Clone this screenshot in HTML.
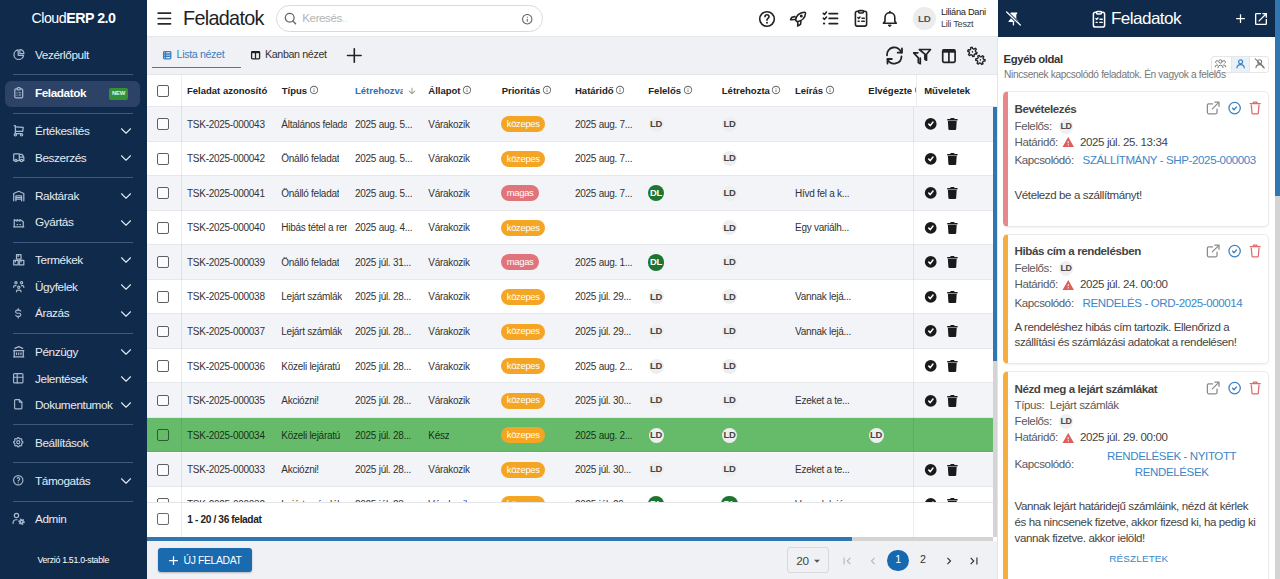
<!DOCTYPE html><html><head><meta charset="utf-8"><title>Feladatok</title><style>
*{box-sizing:border-box}
html,body{margin:0;padding:0}
body{width:1280px;height:579px;overflow:hidden;position:relative;font-family:"Liberation Sans",sans-serif;background:#fff;color:#333}
div,span,svg{position:absolute}
svg{display:block}
.ic{position:absolute}
.t{white-space:nowrap;line-height:1.3}
</style></head><body>
<div style="left:0;top:0;width:147px;height:579px;background:#0f2a4b">
<span class="t" style="left:-26.50px;width:200px;text-align:center;top:9.17px;font-size:14.23px;letter-spacing:-0.484px;color:#fff;font-weight:400;">Cloud<b>ERP 2.0</b></span>
<div style="left:5px;top:81px;width:135px;height:26px;border-radius:6px;background:#2c4266"></div>
<div style="left:13px;top:74.3px;width:120px;height:1px;background:#40577a"></div>
<div style="left:13px;top:112.5px;width:120px;height:1px;background:#40577a"></div>
<div style="left:13px;top:176.9px;width:120px;height:1px;background:#40577a"></div>
<div style="left:13px;top:242.0px;width:120px;height:1px;background:#40577a"></div>
<div style="left:13px;top:333.0px;width:120px;height:1px;background:#40577a"></div>
<div style="left:13px;top:424.3px;width:120px;height:1px;background:#40577a"></div>
<div style="left:13px;top:461.5px;width:120px;height:1px;background:#40577a"></div>
<div style="left:13px;top:500.5px;width:120px;height:1px;background:#40577a"></div>
<svg class="ic" style="left:11.75px;top:47.95px" width="13.5" height="13.5" viewBox="0 0 24 24" fill="none" stroke="#a9b8cc" stroke-width="2.2" stroke-linecap="round" stroke-linejoin="round"><path d="M11 3.5a8.5 8.5 0 1 0 9.5 9.5h-9.5z"/><path d="M14 2.8v7.2h7.2a7.5 7.5 0 0 0 -7.2 -7.2z"/></svg>
<span class="t" style="left:35.00px;top:46.98px;font-size:11.77px;letter-spacing:-0.400px;color:#e6ebf2;font-weight:400;">Vezérlőpult</span>
<svg class="ic" style="left:11.75px;top:85.95px" width="13.5" height="13.5" viewBox="0 0 24 24" fill="none" stroke="#a9b8cc" stroke-width="2.2" stroke-linecap="round" stroke-linejoin="round"><path d="M9 5h-2a2 2 0 0 0 -2 2v12a2 2 0 0 0 2 2h10a2 2 0 0 0 2 -2v-12a2 2 0 0 0 -2 -2h-2"/><path d="M9 5a2 2 0 0 1 2 -2h2a2 2 0 0 1 2 2v0a2 2 0 0 1 -2 2h-2a2 2 0 0 1 -2 -2z"/><path d="M9 12h.01"/><path d="M13 12h2"/><path d="M9 16h.01"/><path d="M13 16h2"/></svg>
<span class="t" style="left:35.00px;top:84.98px;font-size:11.77px;letter-spacing:-0.431px;color:#fff;font-weight:700;">Feladatok</span>
<svg class="ic" style="left:11.75px;top:123.94999999999999px" width="13.5" height="13.5" viewBox="0 0 24 24" fill="none" stroke="#a9b8cc" stroke-width="2.2" stroke-linecap="round" stroke-linejoin="round"><path d="M6 19m-2 0a2 2 0 1 0 4 0a2 2 0 1 0 -4 0"/><path d="M17 19m-2 0a2 2 0 1 0 4 0a2 2 0 1 0 -4 0"/><path d="M17 17h-11v-14h-2"/><path d="M6 5l14 1l-1 7h-13"/></svg>
<span class="t" style="left:35.00px;top:122.98px;font-size:11.77px;letter-spacing:-0.400px;color:#e6ebf2;font-weight:400;">Értékesítés</span>
<svg class="ic" style="left:116.8px;top:122.19999999999999px" width="18" height="18" viewBox="0 0 24 24" fill="none" stroke="#dfe5ee" stroke-width="1.5" stroke-linecap="round" stroke-linejoin="round"><path d="M6 9l6 6l6 -6"/></svg>
<svg class="ic" style="left:11.75px;top:150.75px" width="13.5" height="13.5" viewBox="0 0 24 24" fill="none" stroke="#a9b8cc" stroke-width="2.2" stroke-linecap="round" stroke-linejoin="round"><path d="M7 17m-2 0a2 2 0 1 0 4 0a2 2 0 1 0 -4 0"/><path d="M17 17m-2 0a2 2 0 1 0 4 0a2 2 0 1 0 -4 0"/><path d="M5 17h-2v-11a1 1 0 0 1 1 -1h9v12m-4 0h6m4 0h2v-6h-8m0 -5h5l3 5"/></svg>
<span class="t" style="left:35.00px;top:149.78px;font-size:11.77px;letter-spacing:-0.400px;color:#e6ebf2;font-weight:400;">Beszerzés</span>
<svg class="ic" style="left:116.8px;top:149.0px" width="18" height="18" viewBox="0 0 24 24" fill="none" stroke="#dfe5ee" stroke-width="1.5" stroke-linecap="round" stroke-linejoin="round"><path d="M6 9l6 6l6 -6"/></svg>
<svg class="ic" style="left:11.75px;top:188.64999999999998px" width="13.5" height="13.5" viewBox="0 0 24 24" fill="none" stroke="#a9b8cc" stroke-width="2.2" stroke-linecap="round" stroke-linejoin="round"><path d="M3 21v-13l9 -4l9 4v13"/><path d="M7 21v-9h10v9"/><path d="M7 15h10"/><path d="M7 18h10"/></svg>
<span class="t" style="left:35.00px;top:187.68px;font-size:11.77px;letter-spacing:-0.400px;color:#e6ebf2;font-weight:400;">Raktárak</span>
<svg class="ic" style="left:116.8px;top:186.89999999999998px" width="18" height="18" viewBox="0 0 24 24" fill="none" stroke="#dfe5ee" stroke-width="1.5" stroke-linecap="round" stroke-linejoin="round"><path d="M6 9l6 6l6 -6"/></svg>
<svg class="ic" style="left:11.75px;top:215.45px" width="13.5" height="13.5" viewBox="0 0 24 24" fill="none" stroke="#a9b8cc" stroke-width="2.2" stroke-linecap="round" stroke-linejoin="round"><path d="M3 21h18"/><path d="M4 21v-13l5 3v-3l5 3v-3l6 4v9"/><path d="M9 17h1"/><path d="M14 17h1"/></svg>
<span class="t" style="left:35.00px;top:214.48px;font-size:11.77px;letter-spacing:-0.400px;color:#e6ebf2;font-weight:400;">Gyártás</span>
<svg class="ic" style="left:116.8px;top:213.7px" width="18" height="18" viewBox="0 0 24 24" fill="none" stroke="#dfe5ee" stroke-width="1.5" stroke-linecap="round" stroke-linejoin="round"><path d="M6 9l6 6l6 -6"/></svg>
<svg class="ic" style="left:11.75px;top:252.95px" width="13.5" height="13.5" viewBox="0 0 24 24" fill="none" stroke="#a9b8cc" stroke-width="2.2" stroke-linecap="round" stroke-linejoin="round"><path d="M3 13h8v8h-8z"/><path d="M13 13h8v8h-8z"/><path d="M8 3h8v8h-8z"/><path d="M6 13v3"/><path d="M16 13v3"/><path d="M11 3v3"/></svg>
<span class="t" style="left:35.00px;top:251.98px;font-size:11.77px;letter-spacing:-0.400px;color:#e6ebf2;font-weight:400;">Termékek</span>
<svg class="ic" style="left:116.8px;top:251.2px" width="18" height="18" viewBox="0 0 24 24" fill="none" stroke="#dfe5ee" stroke-width="1.5" stroke-linecap="round" stroke-linejoin="round"><path d="M6 9l6 6l6 -6"/></svg>
<svg class="ic" style="left:11.75px;top:279.65px" width="13.5" height="13.5" viewBox="0 0 24 24" fill="none" stroke="#a9b8cc" stroke-width="2.2" stroke-linecap="round" stroke-linejoin="round"><path d="M10 13a2 2 0 1 0 4 0a2 2 0 0 0 -4 0"/><path d="M8 21v-1a2 2 0 0 1 2 -2h4a2 2 0 0 1 2 2v1"/><path d="M15 5a2 2 0 1 0 4 0a2 2 0 0 0 -4 0"/><path d="M17 10h2a2 2 0 0 1 2 2v1"/><path d="M5 5a2 2 0 1 0 4 0a2 2 0 0 0 -4 0"/><path d="M3 13v-1a2 2 0 0 1 2 -2h2"/></svg>
<span class="t" style="left:35.00px;top:278.68px;font-size:11.77px;letter-spacing:-0.400px;color:#e6ebf2;font-weight:400;">Ügyfelek</span>
<svg class="ic" style="left:116.8px;top:277.9px" width="18" height="18" viewBox="0 0 24 24" fill="none" stroke="#dfe5ee" stroke-width="1.5" stroke-linecap="round" stroke-linejoin="round"><path d="M6 9l6 6l6 -6"/></svg>
<svg class="ic" style="left:12.25px;top:306.95px" width="12.5" height="12.5" viewBox="0 0 24 24" fill="none" stroke="#a9b8cc" stroke-width="2.2" stroke-linecap="round" stroke-linejoin="round"><path d="M16.7 8a3 3 0 0 0 -2.7 -2h-4a3 3 0 0 0 0 6h4a3 3 0 0 1 0 6h-4a3 3 0 0 1 -2.7 -2"/><path d="M12 3v3m0 12v3"/></svg>
<span class="t" style="left:35.00px;top:305.48px;font-size:11.77px;letter-spacing:-0.400px;color:#e6ebf2;font-weight:400;">Árazás</span>
<svg class="ic" style="left:116.8px;top:304.7px" width="18" height="18" viewBox="0 0 24 24" fill="none" stroke="#dfe5ee" stroke-width="1.5" stroke-linecap="round" stroke-linejoin="round"><path d="M6 9l6 6l6 -6"/></svg>
<svg class="ic" style="left:11.75px;top:344.95px" width="13.5" height="13.5" viewBox="0 0 24 24" fill="none" stroke="#a9b8cc" stroke-width="2.2" stroke-linecap="round" stroke-linejoin="round"><path d="M3 21h18"/><path d="M3 10h18"/><path d="M5 6l7 -3l7 3"/><path d="M4 10v11"/><path d="M20 10v11"/><path d="M8 14v3"/><path d="M12 14v3"/><path d="M16 14v3"/></svg>
<span class="t" style="left:35.00px;top:343.98px;font-size:11.77px;letter-spacing:-0.400px;color:#e6ebf2;font-weight:400;">Pénzügy</span>
<svg class="ic" style="left:116.8px;top:343.2px" width="18" height="18" viewBox="0 0 24 24" fill="none" stroke="#dfe5ee" stroke-width="1.5" stroke-linecap="round" stroke-linejoin="round"><path d="M6 9l6 6l6 -6"/></svg>
<svg class="ic" style="left:12.25px;top:372.25px" width="12.5" height="12.5" viewBox="0 0 24 24" fill="none" stroke="#a9b8cc" stroke-width="2.2" stroke-linecap="round" stroke-linejoin="round"><path d="M3 5a2 2 0 0 1 2 -2h14a2 2 0 0 1 2 2v14a2 2 0 0 1 -2 2h-14a2 2 0 0 1 -2 -2v-14z"/><path d="M3 10h18"/><path d="M10 3v18"/></svg>
<span class="t" style="left:35.00px;top:370.78px;font-size:11.77px;letter-spacing:-0.400px;color:#e6ebf2;font-weight:400;">Jelentések</span>
<svg class="ic" style="left:116.8px;top:370.0px" width="18" height="18" viewBox="0 0 24 24" fill="none" stroke="#dfe5ee" stroke-width="1.5" stroke-linecap="round" stroke-linejoin="round"><path d="M6 9l6 6l6 -6"/></svg>
<svg class="ic" style="left:12.25px;top:398.25px" width="12.5" height="12.5" viewBox="0 0 24 24" fill="none" stroke="#a9b8cc" stroke-width="2.2" stroke-linecap="round" stroke-linejoin="round"><path d="M14 3v4a1 1 0 0 0 1 1h4"/><path d="M17 21h-10a2 2 0 0 1 -2 -2v-14a2 2 0 0 1 2 -2h7l5 5v11a2 2 0 0 1 -2 2z"/></svg>
<span class="t" style="left:35.00px;top:396.78px;font-size:11.77px;letter-spacing:-0.400px;color:#e6ebf2;font-weight:400;">Dokumentumok</span>
<svg class="ic" style="left:116.8px;top:396.0px" width="18" height="18" viewBox="0 0 24 24" fill="none" stroke="#dfe5ee" stroke-width="1.5" stroke-linecap="round" stroke-linejoin="round"><path d="M6 9l6 6l6 -6"/></svg>
<svg class="ic" style="left:12.25px;top:436.45px" width="12.5" height="12.5" viewBox="0 0 24 24" fill="none" stroke="#a9b8cc" stroke-width="2.2" stroke-linecap="round" stroke-linejoin="round"><path d="M10.325 4.317c.426 -1.756 2.924 -1.756 3.35 0a1.724 1.724 0 0 0 2.573 1.066c1.543 -.94 3.31 .826 2.37 2.37a1.724 1.724 0 0 0 1.065 2.572c1.756 .426 1.756 2.924 0 3.35a1.724 1.724 0 0 0 -1.066 2.573c.94 1.543 -.826 3.31 -2.37 2.37a1.724 1.724 0 0 0 -2.572 1.065c-.426 1.756 -2.924 1.756 -3.35 0a1.724 1.724 0 0 0 -2.573 -1.066c-1.543 .94 -3.31 -.826 -2.37 -2.37a1.724 1.724 0 0 0 -1.065 -2.572c-1.756 -.426 -1.756 -2.924 0 -3.35a1.724 1.724 0 0 0 1.066 -2.573c-.94 -1.543 .826 -3.31 2.37 -2.37c1 .608 2.296 .07 2.572 -1.065z"/><path d="M9 12a3 3 0 1 0 6 0a3 3 0 0 0 -6 0"/></svg>
<span class="t" style="left:35.00px;top:434.98px;font-size:11.77px;letter-spacing:-0.400px;color:#e6ebf2;font-weight:400;">Beállítások</span>
<svg class="ic" style="left:12.25px;top:474.45px" width="12.5" height="12.5" viewBox="0 0 24 24" fill="none" stroke="#a9b8cc" stroke-width="2.2" stroke-linecap="round" stroke-linejoin="round"><path d="M12 12m-9 0a9 9 0 1 0 18 0a9 9 0 1 0 -18 0"/><path d="M12 17v.01"/><path d="M12 13.5a1.5 1.5 0 0 1 1 -1.5a2.6 2.6 0 1 0 -3 -4"/></svg>
<span class="t" style="left:35.00px;top:472.98px;font-size:11.77px;letter-spacing:-0.400px;color:#e6ebf2;font-weight:400;">Támogatás</span>
<svg class="ic" style="left:116.8px;top:472.2px" width="18" height="18" viewBox="0 0 24 24" fill="none" stroke="#dfe5ee" stroke-width="1.5" stroke-linecap="round" stroke-linejoin="round"><path d="M6 9l6 6l6 -6"/></svg>
<svg class="ic" style="left:11.3px;top:511.45px" width="14.5" height="14.5" viewBox="0 0 24 24" fill="none" stroke="#a9b8cc" stroke-width="2" stroke-linecap="round" stroke-linejoin="round"><path d="M5.5 7.5a3.6 3.6 0 1 0 7.2 0a3.6 3.6 0 0 0 -7.2 0"/><path d="M3.5 20.5v-1.5a4.5 4.5 0 0 1 4.5 -4.5h2.2"/><path d="M21.08 17.39 L22.50 17.96 L22.17 19.60 L20.63 19.57 L19.64 20.69 L19.86 22.21 L18.28 22.74 L17.53 21.40 L16.07 21.10 L14.86 22.05 L13.61 20.94 L14.40 19.63 L13.92 18.21 L12.50 17.64 L12.83 16.00 L14.37 16.03 L15.36 14.91 L15.14 13.39 L16.72 12.86 L17.47 14.20 L18.93 14.50 L20.14 13.55 L21.39 14.66 L20.60 15.97Z" fill="#a9b8cc" stroke-width="1"/><circle cx="17.5" cy="17.8" r="1.3" fill="#0f2a4b" stroke="none"/></svg>
<span class="t" style="left:35.00px;top:510.98px;font-size:11.77px;letter-spacing:-0.400px;color:#e6ebf2;font-weight:400;">Admin</span>
<div style="left:109px;top:87.8px;width:19.2px;height:12px;border-radius:2px;background:#33913a"></div>
<span class="t" style="left:108.50px;width:20px;text-align:center;top:89.64px;font-size:5.89px;letter-spacing:-0.218px;color:#e7f5e7;font-weight:700;">NEW</span>
<span class="t" style="left:-26.80px;width:200px;text-align:center;top:555.45px;font-size:8.77px;letter-spacing:-0.296px;color:#fff;font-weight:400;">Verzió 1.51.0-stable</span>
</div>
<div style="left:147px;top:0;width:851px;height:37px;background:#fff;border-bottom:1px solid #e4e6ea"></div>
<span class="t" style="left:183.00px;top:5.51px;font-size:19.8px;letter-spacing:-0.676px;color:#222;font-weight:400;">Feladatok</span>
<div style="left:276px;top:5px;width:266.5px;height:27px;border:1px solid #dadada;border-radius:13.5px;background:#fff"></div>
<svg class="ic" style="left:282px;top:10px" width="16" height="16" viewBox="0 0 16 16" fill="none" stroke="#666" stroke-width="1.3" stroke-linecap="round"><circle cx="7.7" cy="7.8" r="4.4"/><path d="M10.9 11l2.7 2.7"/></svg>
<span class="t" style="left:302.30px;top:11.12px;font-size:11.56px;letter-spacing:-0.395px;color:#b3b3b3;font-weight:400;">Keresés<span style="color:#e6e6e6">..</span></span>
<svg class="ic" style="left:521.4px;top:13.4px" width="12.5" height="12.5" viewBox="0 0 24 24" fill="#666" ><path d="M11 7h2v2h-2zm0 4h2v6h-2zm1-9C6.48 2 2 6.48 2 12s4.48 10 10 10 10-4.48 10-10S17.52 2 12 2zm0 18c-4.41 0-8-3.59-8-8s3.59-8 8-8 8 3.59 8 8-3.59 8-8 8z"/></svg>
<svg class="ic" style="left:754.5px;top:6.6px" width="24" height="24" viewBox="0 0 24 24" fill="none" stroke="#222" stroke-width="1.6" stroke-linecap="round" stroke-linejoin="round"><circle cx="12" cy="12" r="7.3"/><path d="M12 15.6v.1" stroke-width="1.9"/><path d="M12 13.3v-.5c0 -.7 .4 -1 1 -1.4c.6 -.4 1 -.9 1 -1.6a2 2 0 0 0 -4 0"/></svg>
<svg class="ic" style="left:788px;top:4px" width="20" height="24" viewBox="0 0 20 24" fill="none" stroke="#222" stroke-width="1.6" stroke-linecap="round" stroke-linejoin="round"><path d="M7.5 16.1C7.9 11.8 11.5 8.6 16.2 8.2Q17.6 8.1 17.5 9.5C17.1 13.6 13.9 16.9 9.2 17.8Z"/><path d="M6.9 12.6L3.9 13.2L2.6 15.7L6.3 15.5"/><path d="M12.9 17.3L12.5 20.4L9.7 22L9.8 18.6"/><circle cx="13.3" cy="11.9" r=".7" fill="#222"/></svg>
<svg class="ic" style="left:820px;top:9px" width="20" height="20" viewBox="0 0 20 20" fill="none" stroke="#222" stroke-width="1.6" stroke-linecap="round" stroke-linejoin="round"><path d="M3.3 4.3l1.2 1.1l2 -2.3M3.3 9.2l1.2 1.1l2 -2.3"/><path d="M3.9 14.6h.3" stroke-width="2"/><path d="M9.2 4.6h8.3M9.2 9.4h8.3M9.2 14.6h8.3" stroke-width="1.8"/></svg>
<svg class="ic" style="left:853.5px;top:9.3px" width="14" height="18" viewBox="0 0 14 18" fill="none" stroke="#222" stroke-width="1.6" stroke-linecap="round" stroke-linejoin="round"><path d="M4.3 2.2H3.3A1.9 1.9 0 0 0 1.4 4.1V15.2A1.9 1.9 0 0 0 3.3 17.1H10.7A1.9 1.9 0 0 0 12.6 15.2V4.1A1.9 1.9 0 0 0 10.7 2.2H9.7"/><rect x="4.4" y="1.6" width="5.2" height="2.4" rx="1.2"/><path d="M3.9 8.6l.8 .8l1.3 -1.4M8 9.2h2.3M4.1 12.3h1.1M7.8 12.3h2.5" stroke-width="1.4400000000000002"/></svg>
<svg class="ic" style="left:881px;top:9px" width="18" height="20" viewBox="0 0 18 20" fill="none" stroke="#222" stroke-width="1.6" stroke-linecap="round" stroke-linejoin="round"><path d="M2.4 14.2H15.3L13.8 12.2V8.5A4.8 4.8 0 0 0 4 8.5V12.2Z"/><path d="M8.9 2.6v.9"/><path d="M7.6 16.1h2.6l-1.3 1.5z" fill="#222" stroke-width="1"/></svg>
<div style="left:913px;top:7.3px;width:22.5px;height:22.5px;border-radius:50%;background:#ececec"></div>
<span class="t" style="left:909.30px;width:30px;text-align:center;top:12.65px;font-size:9.84px;letter-spacing:-0.358px;color:#555;font-weight:700;">LD</span>
<span class="t" style="left:941.00px;top:5.59px;font-size:9.31px;letter-spacing:-0.317px;color:#222;font-weight:400;">Liliána Dani</span>
<span class="t" style="left:941.00px;top:18.09px;font-size:9.31px;letter-spacing:-0.317px;color:#444;font-weight:400;">Lili Teszt</span>
<div style="left:147px;top:37px;width:851px;height:38px;background:#eff1f5;border-bottom:1px solid #e3e5ea"></div>
<div style="left:152px;top:66.8px;width:88.5px;height:1.6px;background:#3a7fc0"></div>
<svg class="ic" style="left:162px;top:50px" width="10" height="10" viewBox="0 0 10 10" fill="none" stroke="#3a7fc1" stroke-width="1.3"><rect x="1.6" y="1.6" width="7.2" height="7.2" rx=".8"/><path d="M3.6 1.6v7.2M1.6 4h7.2"/><path d="M1.6 6.3h7.2" stroke-width="1.6"/></svg>
<span class="t" style="left:176.60px;top:48.28px;font-size:10.7px;letter-spacing:-0.364px;color:#3a7fc1;font-weight:400;">Lista nézet</span>
<svg class="ic" style="left:250px;top:50px" width="11" height="10" viewBox="0 0 11 10" fill="none" stroke="#222" stroke-width="1.3"><rect x="1.6" y="1.6" width="8" height="7.2" rx=".8"/><path d="M1.6 2.3h8" stroke-width="1.8"/><path d="M5.5 2v6.8"/></svg>
<span class="t" style="left:265.00px;top:48.28px;font-size:10.7px;letter-spacing:-0.364px;color:#333;font-weight:400;">Kanban nézet</span>
<svg class="ic" style="left:345px;top:46px" width="20" height="20" viewBox="0 0 20 20" fill="none" stroke="#222" stroke-width="1.6" stroke-linecap="round"><path d="M2.5 9.5h13.6M9.3 2.7v13.6"/></svg>
<svg class="ic" style="left:882px;top:44px" width="24" height="24" viewBox="0 0 24 24" fill="none" stroke="#222" stroke-width="1.8" stroke-linecap="round" stroke-linejoin="round"><path d="M5 11.3a7.3 7.3 0 0 1 14.3 -2.6"/><path d="M20 4.5v4.2h-4.3"/><path d="M19.5 12.5a7.3 7.3 0 0 1 -13.9 2.9"/><path d="M5.5 19.5v-4.5h4.3"/></svg>
<svg class="ic" style="left:908px;top:44px" width="30" height="24" viewBox="0 0 30 24" fill="none" stroke="#222" stroke-width="1.7" stroke-linecap="round" stroke-linejoin="round"><path d="M11.3 5.5h11.2l-4 4.7v6l-1.6 -.9v-5.1z"/><path d="M9.8 8.8h-4.1l4.6 5v4.7l2 1.2v-5.5"/></svg>
<svg class="ic" style="left:940px;top:47px" width="18" height="18" viewBox="0 0 18 18" fill="none" stroke="#222" stroke-width="1.7" stroke-linejoin="round"><rect x="2.7" y="2.9" width="12.4" height="12.4" rx="1.3"/><path d="M2.7 4.2h12.4" stroke-width="3"/><path d="M8.9 3v12.3"/></svg>
<svg class="ic" style="left:962px;top:42px" width="28" height="28" viewBox="0 0 28 28" fill="none" stroke="#222" stroke-width="1.35" stroke-linejoin="round"><path d="M13.60 9.85 L15.06 10.52 L14.60 12.02 L13.02 11.74 L12.04 12.65 L12.19 14.25 L10.66 14.59 L10.11 13.09 L8.84 12.69 L7.53 13.62 L6.47 12.47 L7.50 11.24 L7.20 9.95 L5.74 9.28 L6.20 7.78 L7.78 8.06 L8.76 7.15 L8.61 5.55 L10.14 5.21 L10.69 6.71 L11.96 7.11 L13.27 6.18 L14.33 7.33 L13.30 8.56Z"/><path d="M21.53 17.22 L23.09 17.58 L22.93 19.14 L21.33 19.19 L20.55 20.27 L21.02 21.80 L19.59 22.45 L18.75 21.08 L17.43 20.95 L16.33 22.12 L15.06 21.20 L15.82 19.79 L15.27 18.58 L13.71 18.22 L13.87 16.66 L15.47 16.61 L16.25 15.53 L15.78 14.00 L17.21 13.35 L18.05 14.72 L19.37 14.85 L20.47 13.68 L21.74 14.60 L20.98 16.01Z"/><circle cx="10.4" cy="9.9" r="0.8" fill="#222" stroke="none"/><circle cx="18.4" cy="17.9" r="0.8" fill="#222" stroke="none"/></svg>
<svg class="ic" style="left:152px;top:6px" width="24" height="26" viewBox="0 0 24 26" fill="none" stroke="#2a2a2a" stroke-width="1.7" stroke-linecap="round"><path d="M6.2 7.2h12.3M6.2 12.5h12.3M6.2 17.8h12.3"/></svg>
<div style="left:147px;top:75px;width:851px;height:462px;background:#fff;overflow:hidden">
<div style="left:0;top:0;width:851px;height:32.00px;background:#fff;border-bottom:1px solid #e6e8ec"></div>
<div style="left:10.20px;top:9.80px;width:12px;height:11.8px;border:1.7px solid #5f5f5f;border-radius:2px;background:rgba(255,255,255,.6)"></div>
<span class="t" style="left:40.00px;top:9.70px;font-size:9.5px;color:#222;font-weight:700">Feladat azonosító</span>
<span class="t" style="left:134.80px;top:9.70px;font-size:9.5px;color:#222;font-weight:700">Típus<svg style="position:relative;display:inline-block;vertical-align:top;margin-left:1.5px;top:0.8px" width="10" height="10" viewBox="0 0 24 24" fill="#666"><path d="M11 7h2v2h-2zm0 4h2v6h-2zm1-9C6.48 2 2 6.48 2 12s4.48 10 10 10 10-4.48 10-10S17.52 2 12 2zm0 18c-4.41 0-8-3.59-8-8s3.59-8 8-8 8 3.59 8 8-3.59 8-8 8z"/></svg></span>
<span class="t" style="left:281.30px;top:9.70px;font-size:9.5px;color:#222;font-weight:700">Állapot<svg style="position:relative;display:inline-block;vertical-align:top;margin-left:1.5px;top:0.8px" width="10" height="10" viewBox="0 0 24 24" fill="#666"><path d="M11 7h2v2h-2zm0 4h2v6h-2zm1-9C6.48 2 2 6.48 2 12s4.48 10 10 10 10-4.48 10-10S17.52 2 12 2zm0 18c-4.41 0-8-3.59-8-8s3.59-8 8-8 8 3.59 8 8-3.59 8-8 8z"/></svg></span>
<span class="t" style="left:354.70px;top:9.70px;font-size:9.5px;color:#222;font-weight:700">Prioritás<svg style="position:relative;display:inline-block;vertical-align:top;margin-left:1.5px;top:0.8px" width="10" height="10" viewBox="0 0 24 24" fill="#666"><path d="M11 7h2v2h-2zm0 4h2v6h-2zm1-9C6.48 2 2 6.48 2 12s4.48 10 10 10 10-4.48 10-10S17.52 2 12 2zm0 18c-4.41 0-8-3.59-8-8s3.59-8 8-8 8 3.59 8 8-3.59 8-8 8z"/></svg></span>
<span class="t" style="left:428.00px;top:9.70px;font-size:9.5px;color:#222;font-weight:700">Határidő<svg style="position:relative;display:inline-block;vertical-align:top;margin-left:1.5px;top:0.8px" width="10" height="10" viewBox="0 0 24 24" fill="#666"><path d="M11 7h2v2h-2zm0 4h2v6h-2zm1-9C6.48 2 2 6.48 2 12s4.48 10 10 10 10-4.48 10-10S17.52 2 12 2zm0 18c-4.41 0-8-3.59-8-8s3.59-8 8-8 8 3.59 8 8-3.59 8-8 8z"/></svg></span>
<span class="t" style="left:501.30px;top:9.70px;font-size:9.5px;color:#222;font-weight:700">Felelős<svg style="position:relative;display:inline-block;vertical-align:top;margin-left:1.5px;top:0.8px" width="10" height="10" viewBox="0 0 24 24" fill="#666"><path d="M11 7h2v2h-2zm0 4h2v6h-2zm1-9C6.48 2 2 6.48 2 12s4.48 10 10 10 10-4.48 10-10S17.52 2 12 2zm0 18c-4.41 0-8-3.59-8-8s3.59-8 8-8 8 3.59 8 8-3.59 8-8 8z"/></svg></span>
<span class="t" style="left:574.80px;top:9.70px;font-size:9.5px;color:#222;font-weight:700">Létrehozta<svg style="position:relative;display:inline-block;vertical-align:top;margin-left:1.5px;top:0.8px" width="10" height="10" viewBox="0 0 24 24" fill="#666"><path d="M11 7h2v2h-2zm0 4h2v6h-2zm1-9C6.48 2 2 6.48 2 12s4.48 10 10 10 10-4.48 10-10S17.52 2 12 2zm0 18c-4.41 0-8-3.59-8-8s3.59-8 8-8 8 3.59 8 8-3.59 8-8 8z"/></svg></span>
<span class="t" style="left:648.00px;top:9.70px;font-size:9.5px;color:#222;font-weight:700">Leírás<svg style="position:relative;display:inline-block;vertical-align:top;margin-left:1.5px;top:0.8px" width="10" height="10" viewBox="0 0 24 24" fill="#666"><path d="M11 7h2v2h-2zm0 4h2v6h-2zm1-9C6.48 2 2 6.48 2 12s4.48 10 10 10 10-4.48 10-10S17.52 2 12 2zm0 18c-4.41 0-8-3.59-8-8s3.59-8 8-8 8 3.59 8 8-3.59 8-8 8z"/></svg></span>
<span class="t" style="left:721.30px;top:9.70px;font-size:9.5px;color:#222;font-weight:700">Elvégezte<svg style="position:relative;display:inline-block;vertical-align:top;margin-left:1.5px;top:0.8px" width="10" height="10" viewBox="0 0 24 24" fill="#666"><path d="M11 7h2v2h-2zm0 4h2v6h-2zm1-9C6.48 2 2 6.48 2 12s4.48 10 10 10 10-4.48 10-10S17.52 2 12 2zm0 18c-4.41 0-8-3.59-8-8s3.59-8 8-8 8 3.59 8 8-3.59 8-8 8z"/></svg></span>
<span class="t" style="left:208px;top:9.70px;font-size:9.5px;color:#2c6fb6;font-weight:700;width:48px;overflow:hidden">Létrehozva</span>
<svg class="ic" style="left:260px;top:10.700000000000003px" width="10" height="10" viewBox="0 0 24 24" fill="#888" ><path d="M20 12l-1.41-1.41L13 16.17V4h-2v12.17l-5.58-5.59L4 12l8 8 8-8z"/></svg>
<div style="left:0;top:32.00px;width:846px;height:34.55px;background:#f3f4f8;border-bottom:1px solid #e6e8ec"></div>
<div style="left:10.20px;top:43.28px;width:12px;height:11.8px;border:1.7px solid #5f5f5f;border-radius:2px;background:rgba(255,255,255,.6)"></div>
<span class="t" style="left:40.00px;top:42.67px;font-size:10px;letter-spacing:-0.27px;color:#333;max-width:88px;overflow:hidden">TSK-2025-000043</span>
<span class="t" style="left:134.30px;top:42.67px;font-size:10px;letter-spacing:-0.27px;color:#333;max-width:66px;overflow:hidden">Általános feladat</span>
<span class="t" style="left:208.00px;top:42.67px;font-size:10px;letter-spacing:-0.27px;color:#333;max-width:67px;overflow:hidden">2025 aug. 5...</span>
<span class="t" style="left:281.30px;top:42.67px;font-size:10px;letter-spacing:-0.27px;color:#333;max-width:67px;overflow:hidden">Várakozik</span>
<span class="t" style="left:428.00px;top:42.67px;font-size:10px;letter-spacing:-0.27px;color:#333;max-width:67px;overflow:hidden">2025 aug. 7...</span>
<div style="left:354.20px;top:41.28px;width:44px;height:16px;border-radius:8px;background:#f5a524"></div>
<span class="t" style="left:359.80px;top:43.00px;font-size:9.42px;letter-spacing:-0.322px;color:#fff;font-weight:400;">közepes</span>
<div style="left:501.50px;top:41.68px;width:15px;height:15px;border-radius:50%;background:#eeeeee"></div>
<span class="t" style="left:499.00px;width:20px;text-align:center;top:42.90px;font-size:9.42px;letter-spacing:-0.347px;color:#444;font-weight:700;">LD</span>
<div style="left:575.00px;top:41.68px;width:15px;height:15px;border-radius:50%;background:#eeeeee"></div>
<span class="t" style="left:572.50px;width:20px;text-align:center;top:42.90px;font-size:9.42px;letter-spacing:-0.347px;color:#444;font-weight:700;">LD</span>
<svg class="ic" style="left:773px;top:41.18px" width="44" height="16" viewBox="0 0 44 16"><circle cx="10.7" cy="7.9" r="5.9" fill="#1a1a1a"/><path d="M8.8 8.1l1.5 1.5l2.7 -3.6" fill="none" stroke="#fff" stroke-width="1.5" stroke-linecap="round" stroke-linejoin="round"/><rect x="27.1" y="3" width="10.6" height="1.4" rx=".6" fill="#1a1a1a"/><rect x="30.3" y="2" width="4.2" height="1.6" rx=".7" fill="#1a1a1a"/><path d="M27.9 4.9H36.7L36.2 13Q36.1 13.9 35.1 13.9H29.5Q28.5 13.9 28.4 13Z" fill="#1a1a1a"/></svg>
<div style="left:0;top:66.55px;width:846px;height:34.55px;background:#fff;border-bottom:1px solid #e6e8ec"></div>
<div style="left:10.20px;top:77.83px;width:12px;height:11.8px;border:1.7px solid #5f5f5f;border-radius:2px;background:rgba(255,255,255,.6)"></div>
<span class="t" style="left:40.00px;top:77.22px;font-size:10px;letter-spacing:-0.27px;color:#333;max-width:88px;overflow:hidden">TSK-2025-000042</span>
<span class="t" style="left:134.30px;top:77.22px;font-size:10px;letter-spacing:-0.27px;color:#333;max-width:66px;overflow:hidden">Önálló feladat</span>
<span class="t" style="left:208.00px;top:77.22px;font-size:10px;letter-spacing:-0.27px;color:#333;max-width:67px;overflow:hidden">2025 aug. 5...</span>
<span class="t" style="left:281.30px;top:77.22px;font-size:10px;letter-spacing:-0.27px;color:#333;max-width:67px;overflow:hidden">Várakozik</span>
<span class="t" style="left:428.00px;top:77.22px;font-size:10px;letter-spacing:-0.27px;color:#333;max-width:67px;overflow:hidden">2025 aug. 7...</span>
<div style="left:354.20px;top:75.83px;width:44px;height:16px;border-radius:8px;background:#f5a524"></div>
<span class="t" style="left:359.80px;top:77.55px;font-size:9.42px;letter-spacing:-0.322px;color:#fff;font-weight:400;">közepes</span>
<div style="left:575.00px;top:76.23px;width:15px;height:15px;border-radius:50%;background:#eeeeee"></div>
<span class="t" style="left:572.50px;width:20px;text-align:center;top:77.45px;font-size:9.42px;letter-spacing:-0.347px;color:#444;font-weight:700;">LD</span>
<svg class="ic" style="left:773px;top:75.73px" width="44" height="16" viewBox="0 0 44 16"><circle cx="10.7" cy="7.9" r="5.9" fill="#1a1a1a"/><path d="M8.8 8.1l1.5 1.5l2.7 -3.6" fill="none" stroke="#fff" stroke-width="1.5" stroke-linecap="round" stroke-linejoin="round"/><rect x="27.1" y="3" width="10.6" height="1.4" rx=".6" fill="#1a1a1a"/><rect x="30.3" y="2" width="4.2" height="1.6" rx=".7" fill="#1a1a1a"/><path d="M27.9 4.9H36.7L36.2 13Q36.1 13.9 35.1 13.9H29.5Q28.5 13.9 28.4 13Z" fill="#1a1a1a"/></svg>
<div style="left:0;top:101.10px;width:846px;height:34.55px;background:#f3f4f8;border-bottom:1px solid #e6e8ec"></div>
<div style="left:10.20px;top:112.38px;width:12px;height:11.8px;border:1.7px solid #5f5f5f;border-radius:2px;background:rgba(255,255,255,.6)"></div>
<span class="t" style="left:40.00px;top:111.77px;font-size:10px;letter-spacing:-0.27px;color:#333;max-width:88px;overflow:hidden">TSK-2025-000041</span>
<span class="t" style="left:134.30px;top:111.77px;font-size:10px;letter-spacing:-0.27px;color:#333;max-width:66px;overflow:hidden">Önálló feladat</span>
<span class="t" style="left:208.00px;top:111.77px;font-size:10px;letter-spacing:-0.27px;color:#333;max-width:67px;overflow:hidden">2025 aug. 5...</span>
<span class="t" style="left:281.30px;top:111.77px;font-size:10px;letter-spacing:-0.27px;color:#333;max-width:67px;overflow:hidden">Várakozik</span>
<span class="t" style="left:428.00px;top:111.77px;font-size:10px;letter-spacing:-0.27px;color:#333;max-width:67px;overflow:hidden">2025 aug. 7...</span>
<span class="t" style="left:648.00px;top:111.77px;font-size:10px;letter-spacing:-0.27px;color:#333;max-width:67px;overflow:hidden">Hívd fel a k...</span>
<div style="left:354.20px;top:110.38px;width:37.5px;height:16px;border-radius:8px;background:#e0747a"></div>
<span class="t" style="left:359.80px;top:112.10px;font-size:9.42px;letter-spacing:-0.322px;color:#fff;font-weight:400;">magas</span>
<div style="left:500.80px;top:110.08px;width:16.4px;height:16.4px;border-radius:50%;background:#1e7431"></div>
<span class="t" style="left:499.00px;width:20px;text-align:center;top:112.30px;font-size:9.42px;letter-spacing:-0.347px;color:#fff;font-weight:700;">DL</span>
<div style="left:575.00px;top:110.78px;width:15px;height:15px;border-radius:50%;background:#eeeeee"></div>
<span class="t" style="left:572.50px;width:20px;text-align:center;top:112.00px;font-size:9.42px;letter-spacing:-0.347px;color:#444;font-weight:700;">LD</span>
<svg class="ic" style="left:773px;top:110.28px" width="44" height="16" viewBox="0 0 44 16"><circle cx="10.7" cy="7.9" r="5.9" fill="#1a1a1a"/><path d="M8.8 8.1l1.5 1.5l2.7 -3.6" fill="none" stroke="#fff" stroke-width="1.5" stroke-linecap="round" stroke-linejoin="round"/><rect x="27.1" y="3" width="10.6" height="1.4" rx=".6" fill="#1a1a1a"/><rect x="30.3" y="2" width="4.2" height="1.6" rx=".7" fill="#1a1a1a"/><path d="M27.9 4.9H36.7L36.2 13Q36.1 13.9 35.1 13.9H29.5Q28.5 13.9 28.4 13Z" fill="#1a1a1a"/></svg>
<div style="left:0;top:135.65px;width:846px;height:34.55px;background:#fff;border-bottom:1px solid #e6e8ec"></div>
<div style="left:10.20px;top:146.92px;width:12px;height:11.8px;border:1.7px solid #5f5f5f;border-radius:2px;background:rgba(255,255,255,.6)"></div>
<span class="t" style="left:40.00px;top:146.32px;font-size:10px;letter-spacing:-0.27px;color:#333;max-width:88px;overflow:hidden">TSK-2025-000040</span>
<span class="t" style="left:134.30px;top:146.32px;font-size:10px;letter-spacing:-0.27px;color:#333;max-width:66px;overflow:hidden">Hibás tétel a rendelésben</span>
<span class="t" style="left:208.00px;top:146.32px;font-size:10px;letter-spacing:-0.27px;color:#333;max-width:67px;overflow:hidden">2025 aug. 4...</span>
<span class="t" style="left:281.30px;top:146.32px;font-size:10px;letter-spacing:-0.27px;color:#333;max-width:67px;overflow:hidden">Várakozik</span>
<span class="t" style="left:648.00px;top:146.32px;font-size:10px;letter-spacing:-0.27px;color:#333;max-width:67px;overflow:hidden">Egy variálh...</span>
<div style="left:354.20px;top:144.92px;width:44px;height:16px;border-radius:8px;background:#f5a524"></div>
<span class="t" style="left:359.80px;top:146.65px;font-size:9.42px;letter-spacing:-0.322px;color:#fff;font-weight:400;">közepes</span>
<div style="left:575.00px;top:145.32px;width:15px;height:15px;border-radius:50%;background:#eeeeee"></div>
<span class="t" style="left:572.50px;width:20px;text-align:center;top:146.55px;font-size:9.42px;letter-spacing:-0.347px;color:#444;font-weight:700;">LD</span>
<svg class="ic" style="left:773px;top:144.82px" width="44" height="16" viewBox="0 0 44 16"><circle cx="10.7" cy="7.9" r="5.9" fill="#1a1a1a"/><path d="M8.8 8.1l1.5 1.5l2.7 -3.6" fill="none" stroke="#fff" stroke-width="1.5" stroke-linecap="round" stroke-linejoin="round"/><rect x="27.1" y="3" width="10.6" height="1.4" rx=".6" fill="#1a1a1a"/><rect x="30.3" y="2" width="4.2" height="1.6" rx=".7" fill="#1a1a1a"/><path d="M27.9 4.9H36.7L36.2 13Q36.1 13.9 35.1 13.9H29.5Q28.5 13.9 28.4 13Z" fill="#1a1a1a"/></svg>
<div style="left:0;top:170.20px;width:846px;height:34.55px;background:#f3f4f8;border-bottom:1px solid #e6e8ec"></div>
<div style="left:10.20px;top:181.47px;width:12px;height:11.8px;border:1.7px solid #5f5f5f;border-radius:2px;background:rgba(255,255,255,.6)"></div>
<span class="t" style="left:40.00px;top:180.87px;font-size:10px;letter-spacing:-0.27px;color:#333;max-width:88px;overflow:hidden">TSK-2025-000039</span>
<span class="t" style="left:134.30px;top:180.87px;font-size:10px;letter-spacing:-0.27px;color:#333;max-width:66px;overflow:hidden">Önálló feladat</span>
<span class="t" style="left:208.00px;top:180.87px;font-size:10px;letter-spacing:-0.27px;color:#333;max-width:67px;overflow:hidden">2025 júl. 31...</span>
<span class="t" style="left:281.30px;top:180.87px;font-size:10px;letter-spacing:-0.27px;color:#333;max-width:67px;overflow:hidden">Várakozik</span>
<span class="t" style="left:428.00px;top:180.87px;font-size:10px;letter-spacing:-0.27px;color:#333;max-width:67px;overflow:hidden">2025 aug. 1...</span>
<div style="left:354.20px;top:179.47px;width:37.5px;height:16px;border-radius:8px;background:#e0747a"></div>
<span class="t" style="left:359.80px;top:181.20px;font-size:9.42px;letter-spacing:-0.322px;color:#fff;font-weight:400;">magas</span>
<div style="left:500.80px;top:179.17px;width:16.4px;height:16.4px;border-radius:50%;background:#1e7431"></div>
<span class="t" style="left:499.00px;width:20px;text-align:center;top:181.40px;font-size:9.42px;letter-spacing:-0.347px;color:#fff;font-weight:700;">DL</span>
<div style="left:575.00px;top:179.87px;width:15px;height:15px;border-radius:50%;background:#eeeeee"></div>
<span class="t" style="left:572.50px;width:20px;text-align:center;top:181.10px;font-size:9.42px;letter-spacing:-0.347px;color:#444;font-weight:700;">LD</span>
<svg class="ic" style="left:773px;top:179.37px" width="44" height="16" viewBox="0 0 44 16"><circle cx="10.7" cy="7.9" r="5.9" fill="#1a1a1a"/><path d="M8.8 8.1l1.5 1.5l2.7 -3.6" fill="none" stroke="#fff" stroke-width="1.5" stroke-linecap="round" stroke-linejoin="round"/><rect x="27.1" y="3" width="10.6" height="1.4" rx=".6" fill="#1a1a1a"/><rect x="30.3" y="2" width="4.2" height="1.6" rx=".7" fill="#1a1a1a"/><path d="M27.9 4.9H36.7L36.2 13Q36.1 13.9 35.1 13.9H29.5Q28.5 13.9 28.4 13Z" fill="#1a1a1a"/></svg>
<div style="left:0;top:204.75px;width:846px;height:34.55px;background:#fff;border-bottom:1px solid #e6e8ec"></div>
<div style="left:10.20px;top:216.02px;width:12px;height:11.8px;border:1.7px solid #5f5f5f;border-radius:2px;background:rgba(255,255,255,.6)"></div>
<span class="t" style="left:40.00px;top:215.42px;font-size:10px;letter-spacing:-0.27px;color:#333;max-width:88px;overflow:hidden">TSK-2025-000038</span>
<span class="t" style="left:134.30px;top:215.42px;font-size:10px;letter-spacing:-0.27px;color:#333;max-width:66px;overflow:hidden">Lejárt számlák</span>
<span class="t" style="left:208.00px;top:215.42px;font-size:10px;letter-spacing:-0.27px;color:#333;max-width:67px;overflow:hidden">2025 júl. 28...</span>
<span class="t" style="left:281.30px;top:215.42px;font-size:10px;letter-spacing:-0.27px;color:#333;max-width:67px;overflow:hidden">Várakozik</span>
<span class="t" style="left:428.00px;top:215.42px;font-size:10px;letter-spacing:-0.27px;color:#333;max-width:67px;overflow:hidden">2025 júl. 29...</span>
<span class="t" style="left:648.00px;top:215.42px;font-size:10px;letter-spacing:-0.27px;color:#333;max-width:67px;overflow:hidden">Vannak lejá...</span>
<div style="left:354.20px;top:214.02px;width:44px;height:16px;border-radius:8px;background:#f5a524"></div>
<span class="t" style="left:359.80px;top:215.75px;font-size:9.42px;letter-spacing:-0.322px;color:#fff;font-weight:400;">közepes</span>
<div style="left:501.50px;top:214.42px;width:15px;height:15px;border-radius:50%;background:#eeeeee"></div>
<span class="t" style="left:499.00px;width:20px;text-align:center;top:215.65px;font-size:9.42px;letter-spacing:-0.347px;color:#444;font-weight:700;">LD</span>
<div style="left:575.00px;top:214.42px;width:15px;height:15px;border-radius:50%;background:#eeeeee"></div>
<span class="t" style="left:572.50px;width:20px;text-align:center;top:215.65px;font-size:9.42px;letter-spacing:-0.347px;color:#444;font-weight:700;">LD</span>
<svg class="ic" style="left:773px;top:213.92px" width="44" height="16" viewBox="0 0 44 16"><circle cx="10.7" cy="7.9" r="5.9" fill="#1a1a1a"/><path d="M8.8 8.1l1.5 1.5l2.7 -3.6" fill="none" stroke="#fff" stroke-width="1.5" stroke-linecap="round" stroke-linejoin="round"/><rect x="27.1" y="3" width="10.6" height="1.4" rx=".6" fill="#1a1a1a"/><rect x="30.3" y="2" width="4.2" height="1.6" rx=".7" fill="#1a1a1a"/><path d="M27.9 4.9H36.7L36.2 13Q36.1 13.9 35.1 13.9H29.5Q28.5 13.9 28.4 13Z" fill="#1a1a1a"/></svg>
<div style="left:0;top:239.30px;width:846px;height:34.55px;background:#f3f4f8;border-bottom:1px solid #e6e8ec"></div>
<div style="left:10.20px;top:250.57px;width:12px;height:11.8px;border:1.7px solid #5f5f5f;border-radius:2px;background:rgba(255,255,255,.6)"></div>
<span class="t" style="left:40.00px;top:249.97px;font-size:10px;letter-spacing:-0.27px;color:#333;max-width:88px;overflow:hidden">TSK-2025-000037</span>
<span class="t" style="left:134.30px;top:249.97px;font-size:10px;letter-spacing:-0.27px;color:#333;max-width:66px;overflow:hidden">Lejárt számlák</span>
<span class="t" style="left:208.00px;top:249.97px;font-size:10px;letter-spacing:-0.27px;color:#333;max-width:67px;overflow:hidden">2025 júl. 28...</span>
<span class="t" style="left:281.30px;top:249.97px;font-size:10px;letter-spacing:-0.27px;color:#333;max-width:67px;overflow:hidden">Várakozik</span>
<span class="t" style="left:428.00px;top:249.97px;font-size:10px;letter-spacing:-0.27px;color:#333;max-width:67px;overflow:hidden">2025 júl. 29...</span>
<span class="t" style="left:648.00px;top:249.97px;font-size:10px;letter-spacing:-0.27px;color:#333;max-width:67px;overflow:hidden">Vannak lejá...</span>
<div style="left:354.20px;top:248.57px;width:44px;height:16px;border-radius:8px;background:#f5a524"></div>
<span class="t" style="left:359.80px;top:250.30px;font-size:9.42px;letter-spacing:-0.322px;color:#fff;font-weight:400;">közepes</span>
<div style="left:501.50px;top:248.97px;width:15px;height:15px;border-radius:50%;background:#eeeeee"></div>
<span class="t" style="left:499.00px;width:20px;text-align:center;top:250.20px;font-size:9.42px;letter-spacing:-0.347px;color:#444;font-weight:700;">LD</span>
<div style="left:575.00px;top:248.97px;width:15px;height:15px;border-radius:50%;background:#eeeeee"></div>
<span class="t" style="left:572.50px;width:20px;text-align:center;top:250.20px;font-size:9.42px;letter-spacing:-0.347px;color:#444;font-weight:700;">LD</span>
<svg class="ic" style="left:773px;top:248.47px" width="44" height="16" viewBox="0 0 44 16"><circle cx="10.7" cy="7.9" r="5.9" fill="#1a1a1a"/><path d="M8.8 8.1l1.5 1.5l2.7 -3.6" fill="none" stroke="#fff" stroke-width="1.5" stroke-linecap="round" stroke-linejoin="round"/><rect x="27.1" y="3" width="10.6" height="1.4" rx=".6" fill="#1a1a1a"/><rect x="30.3" y="2" width="4.2" height="1.6" rx=".7" fill="#1a1a1a"/><path d="M27.9 4.9H36.7L36.2 13Q36.1 13.9 35.1 13.9H29.5Q28.5 13.9 28.4 13Z" fill="#1a1a1a"/></svg>
<div style="left:0;top:273.85px;width:846px;height:34.55px;background:#fff;border-bottom:1px solid #e6e8ec"></div>
<div style="left:10.20px;top:285.12px;width:12px;height:11.8px;border:1.7px solid #5f5f5f;border-radius:2px;background:rgba(255,255,255,.6)"></div>
<span class="t" style="left:40.00px;top:284.52px;font-size:10px;letter-spacing:-0.27px;color:#333;max-width:88px;overflow:hidden">TSK-2025-000036</span>
<span class="t" style="left:134.30px;top:284.52px;font-size:10px;letter-spacing:-0.27px;color:#333;max-width:66px;overflow:hidden">Közeli lejáratú</span>
<span class="t" style="left:208.00px;top:284.52px;font-size:10px;letter-spacing:-0.27px;color:#333;max-width:67px;overflow:hidden">2025 júl. 28...</span>
<span class="t" style="left:281.30px;top:284.52px;font-size:10px;letter-spacing:-0.27px;color:#333;max-width:67px;overflow:hidden">Várakozik</span>
<span class="t" style="left:428.00px;top:284.52px;font-size:10px;letter-spacing:-0.27px;color:#333;max-width:67px;overflow:hidden">2025 aug. 2...</span>
<div style="left:354.20px;top:283.12px;width:44px;height:16px;border-radius:8px;background:#f5a524"></div>
<span class="t" style="left:359.80px;top:284.85px;font-size:9.42px;letter-spacing:-0.322px;color:#fff;font-weight:400;">közepes</span>
<div style="left:501.50px;top:283.52px;width:15px;height:15px;border-radius:50%;background:#eeeeee"></div>
<span class="t" style="left:499.00px;width:20px;text-align:center;top:284.75px;font-size:9.42px;letter-spacing:-0.347px;color:#444;font-weight:700;">LD</span>
<div style="left:575.00px;top:283.52px;width:15px;height:15px;border-radius:50%;background:#eeeeee"></div>
<span class="t" style="left:572.50px;width:20px;text-align:center;top:284.75px;font-size:9.42px;letter-spacing:-0.347px;color:#444;font-weight:700;">LD</span>
<svg class="ic" style="left:773px;top:283.02px" width="44" height="16" viewBox="0 0 44 16"><circle cx="10.7" cy="7.9" r="5.9" fill="#1a1a1a"/><path d="M8.8 8.1l1.5 1.5l2.7 -3.6" fill="none" stroke="#fff" stroke-width="1.5" stroke-linecap="round" stroke-linejoin="round"/><rect x="27.1" y="3" width="10.6" height="1.4" rx=".6" fill="#1a1a1a"/><rect x="30.3" y="2" width="4.2" height="1.6" rx=".7" fill="#1a1a1a"/><path d="M27.9 4.9H36.7L36.2 13Q36.1 13.9 35.1 13.9H29.5Q28.5 13.9 28.4 13Z" fill="#1a1a1a"/></svg>
<div style="left:0;top:308.40px;width:846px;height:34.55px;background:#f3f4f8;border-bottom:1px solid #e6e8ec"></div>
<div style="left:10.20px;top:319.67px;width:12px;height:11.8px;border:1.7px solid #5f5f5f;border-radius:2px;background:rgba(255,255,255,.6)"></div>
<span class="t" style="left:40.00px;top:319.07px;font-size:10px;letter-spacing:-0.27px;color:#333;max-width:88px;overflow:hidden">TSK-2025-000035</span>
<span class="t" style="left:134.30px;top:319.07px;font-size:10px;letter-spacing:-0.27px;color:#333;max-width:66px;overflow:hidden">Akciózni!</span>
<span class="t" style="left:208.00px;top:319.07px;font-size:10px;letter-spacing:-0.27px;color:#333;max-width:67px;overflow:hidden">2025 júl. 28...</span>
<span class="t" style="left:281.30px;top:319.07px;font-size:10px;letter-spacing:-0.27px;color:#333;max-width:67px;overflow:hidden">Várakozik</span>
<span class="t" style="left:428.00px;top:319.07px;font-size:10px;letter-spacing:-0.27px;color:#333;max-width:67px;overflow:hidden">2025 júl. 30...</span>
<span class="t" style="left:648.00px;top:319.07px;font-size:10px;letter-spacing:-0.27px;color:#333;max-width:67px;overflow:hidden">Ezeket a te...</span>
<div style="left:354.20px;top:317.67px;width:44px;height:16px;border-radius:8px;background:#f5a524"></div>
<span class="t" style="left:359.80px;top:319.40px;font-size:9.42px;letter-spacing:-0.322px;color:#fff;font-weight:400;">közepes</span>
<div style="left:501.50px;top:318.07px;width:15px;height:15px;border-radius:50%;background:#eeeeee"></div>
<span class="t" style="left:499.00px;width:20px;text-align:center;top:319.30px;font-size:9.42px;letter-spacing:-0.347px;color:#444;font-weight:700;">LD</span>
<div style="left:575.00px;top:318.07px;width:15px;height:15px;border-radius:50%;background:#eeeeee"></div>
<span class="t" style="left:572.50px;width:20px;text-align:center;top:319.30px;font-size:9.42px;letter-spacing:-0.347px;color:#444;font-weight:700;">LD</span>
<svg class="ic" style="left:773px;top:317.57px" width="44" height="16" viewBox="0 0 44 16"><circle cx="10.7" cy="7.9" r="5.9" fill="#1a1a1a"/><path d="M8.8 8.1l1.5 1.5l2.7 -3.6" fill="none" stroke="#fff" stroke-width="1.5" stroke-linecap="round" stroke-linejoin="round"/><rect x="27.1" y="3" width="10.6" height="1.4" rx=".6" fill="#1a1a1a"/><rect x="30.3" y="2" width="4.2" height="1.6" rx=".7" fill="#1a1a1a"/><path d="M27.9 4.9H36.7L36.2 13Q36.1 13.9 35.1 13.9H29.5Q28.5 13.9 28.4 13Z" fill="#1a1a1a"/></svg>
<div style="left:0;top:342.95px;width:846px;height:34.55px;background:#66bb6a;border-bottom:1px solid #5fae63"></div>
<div style="left:10.20px;top:354.22px;width:12px;height:11.8px;border:1.7px solid #2e5a30;border-radius:2px;background:transparent"></div>
<span class="t" style="left:40.00px;top:353.62px;font-size:10px;letter-spacing:-0.27px;color:rgba(0,0,0,.78);max-width:88px;overflow:hidden">TSK-2025-000034</span>
<span class="t" style="left:134.30px;top:353.62px;font-size:10px;letter-spacing:-0.27px;color:rgba(0,0,0,.78);max-width:66px;overflow:hidden">Közeli lejáratú</span>
<span class="t" style="left:208.00px;top:353.62px;font-size:10px;letter-spacing:-0.27px;color:rgba(0,0,0,.78);max-width:67px;overflow:hidden">2025 júl. 28...</span>
<span class="t" style="left:281.30px;top:353.62px;font-size:10px;letter-spacing:-0.27px;color:rgba(0,0,0,.78);max-width:67px;overflow:hidden">Kész</span>
<span class="t" style="left:428.00px;top:353.62px;font-size:10px;letter-spacing:-0.27px;color:rgba(0,0,0,.78);max-width:67px;overflow:hidden">2025 aug. 2...</span>
<div style="left:354.20px;top:352.22px;width:44px;height:16px;border-radius:8px;background:#f5a524"></div>
<span class="t" style="left:359.80px;top:353.95px;font-size:9.42px;letter-spacing:-0.322px;color:#fff;font-weight:400;">közepes</span>
<div style="left:501.50px;top:352.62px;width:15px;height:15px;border-radius:50%;background:#eeeeee"></div>
<span class="t" style="left:499.00px;width:20px;text-align:center;top:353.85px;font-size:9.42px;letter-spacing:-0.347px;color:#444;font-weight:700;">LD</span>
<div style="left:575.00px;top:352.62px;width:15px;height:15px;border-radius:50%;background:#eeeeee"></div>
<span class="t" style="left:572.50px;width:20px;text-align:center;top:353.85px;font-size:9.42px;letter-spacing:-0.347px;color:#444;font-weight:700;">LD</span>
<div style="left:721.50px;top:352.62px;width:15px;height:15px;border-radius:50%;background:#eeeeee"></div>
<span class="t" style="left:719.00px;width:20px;text-align:center;top:353.85px;font-size:9.42px;letter-spacing:-0.347px;color:#444;font-weight:700;">LD</span>
<div style="left:0;top:377.50px;width:846px;height:34.55px;background:#f3f4f8;border-bottom:1px solid #e6e8ec"></div>
<div style="left:10.20px;top:388.77px;width:12px;height:11.8px;border:1.7px solid #5f5f5f;border-radius:2px;background:rgba(255,255,255,.6)"></div>
<span class="t" style="left:40.00px;top:388.17px;font-size:10px;letter-spacing:-0.27px;color:#333;max-width:88px;overflow:hidden">TSK-2025-000033</span>
<span class="t" style="left:134.30px;top:388.17px;font-size:10px;letter-spacing:-0.27px;color:#333;max-width:66px;overflow:hidden">Akciózni!</span>
<span class="t" style="left:208.00px;top:388.17px;font-size:10px;letter-spacing:-0.27px;color:#333;max-width:67px;overflow:hidden">2025 júl. 28...</span>
<span class="t" style="left:281.30px;top:388.17px;font-size:10px;letter-spacing:-0.27px;color:#333;max-width:67px;overflow:hidden">Várakozik</span>
<span class="t" style="left:428.00px;top:388.17px;font-size:10px;letter-spacing:-0.27px;color:#333;max-width:67px;overflow:hidden">2025 júl. 30...</span>
<span class="t" style="left:648.00px;top:388.17px;font-size:10px;letter-spacing:-0.27px;color:#333;max-width:67px;overflow:hidden">Ezeket a te...</span>
<div style="left:354.20px;top:386.77px;width:44px;height:16px;border-radius:8px;background:#f5a524"></div>
<span class="t" style="left:359.80px;top:388.50px;font-size:9.42px;letter-spacing:-0.322px;color:#fff;font-weight:400;">közepes</span>
<div style="left:501.50px;top:387.17px;width:15px;height:15px;border-radius:50%;background:#eeeeee"></div>
<span class="t" style="left:499.00px;width:20px;text-align:center;top:388.40px;font-size:9.42px;letter-spacing:-0.347px;color:#444;font-weight:700;">LD</span>
<div style="left:575.00px;top:387.17px;width:15px;height:15px;border-radius:50%;background:#eeeeee"></div>
<span class="t" style="left:572.50px;width:20px;text-align:center;top:388.40px;font-size:9.42px;letter-spacing:-0.347px;color:#444;font-weight:700;">LD</span>
<svg class="ic" style="left:773px;top:386.67px" width="44" height="16" viewBox="0 0 44 16"><circle cx="10.7" cy="7.9" r="5.9" fill="#1a1a1a"/><path d="M8.8 8.1l1.5 1.5l2.7 -3.6" fill="none" stroke="#fff" stroke-width="1.5" stroke-linecap="round" stroke-linejoin="round"/><rect x="27.1" y="3" width="10.6" height="1.4" rx=".6" fill="#1a1a1a"/><rect x="30.3" y="2" width="4.2" height="1.6" rx=".7" fill="#1a1a1a"/><path d="M27.9 4.9H36.7L36.2 13Q36.1 13.9 35.1 13.9H29.5Q28.5 13.9 28.4 13Z" fill="#1a1a1a"/></svg>
<div style="left:0;top:412.05px;width:846px;height:34.55px;background:#fff;border-bottom:1px solid #e6e8ec"></div>
<div style="left:10.20px;top:423.32px;width:12px;height:11.8px;border:1.7px solid #5f5f5f;border-radius:2px;background:rgba(255,255,255,.6)"></div>
<span class="t" style="left:40.00px;top:422.72px;font-size:10px;letter-spacing:-0.27px;color:#333;max-width:88px;overflow:hidden">TSK-2025-000032</span>
<span class="t" style="left:134.30px;top:422.72px;font-size:10px;letter-spacing:-0.27px;color:#333;max-width:66px;overflow:hidden">Lejárt számlák</span>
<span class="t" style="left:208.00px;top:422.72px;font-size:10px;letter-spacing:-0.27px;color:#333;max-width:67px;overflow:hidden">2025 júl. 28...</span>
<span class="t" style="left:281.30px;top:422.72px;font-size:10px;letter-spacing:-0.27px;color:#333;max-width:67px;overflow:hidden">Várakozik</span>
<span class="t" style="left:428.00px;top:422.72px;font-size:10px;letter-spacing:-0.27px;color:#333;max-width:67px;overflow:hidden">2025 júl. 29...</span>
<span class="t" style="left:648.00px;top:422.72px;font-size:10px;letter-spacing:-0.27px;color:#333;max-width:67px;overflow:hidden">Vannak lejá...</span>
<div style="left:354.20px;top:421.32px;width:44px;height:16px;border-radius:8px;background:#f5a524"></div>
<span class="t" style="left:359.80px;top:423.05px;font-size:9.42px;letter-spacing:-0.322px;color:#fff;font-weight:400;">közepes</span>
<div style="left:500.80px;top:421.02px;width:16.4px;height:16.4px;border-radius:50%;background:#1e7431"></div>
<span class="t" style="left:499.00px;width:20px;text-align:center;top:423.25px;font-size:9.42px;letter-spacing:-0.347px;color:#fff;font-weight:700;">DL</span>
<div style="left:574.30px;top:421.02px;width:16.4px;height:16.4px;border-radius:50%;background:#1e7431"></div>
<span class="t" style="left:572.50px;width:20px;text-align:center;top:423.25px;font-size:9.42px;letter-spacing:-0.347px;color:#fff;font-weight:700;">DL</span>
<svg class="ic" style="left:773px;top:421.22px" width="44" height="16" viewBox="0 0 44 16"><circle cx="10.7" cy="7.9" r="5.9" fill="#1a1a1a"/><path d="M8.8 8.1l1.5 1.5l2.7 -3.6" fill="none" stroke="#fff" stroke-width="1.5" stroke-linecap="round" stroke-linejoin="round"/><rect x="27.1" y="3" width="10.6" height="1.4" rx=".6" fill="#1a1a1a"/><rect x="30.3" y="2" width="4.2" height="1.6" rx=".7" fill="#1a1a1a"/><path d="M27.9 4.9H36.7L36.2 13Q36.1 13.9 35.1 13.9H29.5Q28.5 13.9 28.4 13Z" fill="#1a1a1a"/></svg>
</div>
<div style="left:993px;top:106.5px;width:4.5px;height:254.5px;background:#2f76b2"></div>
<div style="left:993px;top:361px;width:4.5px;height:176px;background:#d4d4d4"></div>
<div style="left:147px;top:502px;width:846px;height:35px;background:#fff;border-top:1px solid #e2e4e8"></div>
<div style="left:157.2px;top:513.30px;width:12px;height:11.8px;border:1.8px solid #6a6a6a;border-radius:2px"></div>
<span class="t" style="left:187.30px;top:512.53px;font-size:10.17px;letter-spacing:-0.375px;color:#222;font-weight:700;">1 - 20 / 36 feladat</span>
<div style="left:147px;top:537px;width:846px;height:4px;background:#d4d4d4"></div>
<div style="left:147px;top:537px;width:705px;height:4px;background:#2f76b2"></div>
<div style="left:147px;top:541px;width:851px;height:38px;background:#eff1f5"></div>
<div style="left:157.6px;top:548.4px;width:94px;height:23.5px;border-radius:3px;background:#1a6ab0;box-shadow:0 1px 2px rgba(0,0,0,.25)"></div>
<svg class="ic" style="left:165.5px;top:552.5px" width="15" height="15" viewBox="0 0 24 24" fill="#fff" ><path d="M19 13h-6v6h-2v-6H5v-2h6V5h2v6h6v2z"/></svg>
<span class="t" style="left:183.50px;top:553.69px;font-size:10.38px;letter-spacing:-0.354px;color:#fff;font-weight:400;">ÚJ FELADAT</span>
<div style="left:787.2px;top:547.2px;width:42px;height:26px;border:1px solid #d8d8d8;border-radius:3px"></div>
<span class="t" style="left:796.30px;top:552.88px;font-size:11.77px;letter-spacing:-0.400px;color:#444;font-weight:400;">20</span>
<svg class="ic" style="left:809.5px;top:553.5px" width="14" height="14" viewBox="0 0 24 24" fill="#555" ><path d="M7 10l5 5 5-5z"/></svg>
<svg class="ic" style="left:840px;top:553.5px" width="14" height="14" viewBox="0 0 24 24" fill="#b8b8b8" ><path d="M18.41 16.59L13.82 12l4.59-4.59L17 6l-6 6 6 6zM6 6h2v12H6z"/></svg>
<svg class="ic" style="left:866px;top:553.5px" width="14" height="14" viewBox="0 0 24 24" fill="#b8b8b8" ><path d="M15.41 7.41L14 6l-6 6 6 6 1.41-1.41L10.83 12z"/></svg>
<div style="left:887.4px;top:549.9px;width:21.2px;height:21.2px;border-radius:50%;background:#1668b0"></div>
<span class="t" style="left:888.00px;width:20px;text-align:center;top:553.38px;font-size:10.7px;letter-spacing:-0.364px;color:#fff;font-weight:400;">1</span>
<span class="t" style="left:912.70px;width:20px;text-align:center;top:553.38px;font-size:10.7px;letter-spacing:-0.364px;color:#333;font-weight:400;">2</span>
<svg class="ic" style="left:941.5px;top:553.5px" width="14" height="14" viewBox="0 0 24 24" fill="#333" ><path d="M10 6L8.59 7.41 13.17 12l-4.58 4.59L10 18l6-6z"/></svg>
<svg class="ic" style="left:967px;top:553.5px" width="14" height="14" viewBox="0 0 24 24" fill="#333" ><path d="M5.59 7.41L10.18 12l-4.59 4.59L7 18l6-6-6-6zM16 6h2v12h-2z"/></svg>
<div style="left:998px;top:0;width:282px;height:579px;background:#fff"></div>
<div style="left:997px;top:37px;width:1px;height:542px;background:#e2e4e8"></div>
<div style="left:998px;top:0;width:277px;height:37px;background:#0f2a4b"></div>
<div style="left:1275px;top:0;width:5px;height:195.5px;background:#2f76b2"></div>
<div style="left:1275px;top:195.5px;width:5px;height:383.5px;background:#d4d4d4"></div>
<svg class="ic" style="left:1002px;top:6px" width="24" height="24" viewBox="0 0 24 24"><path fill="#fff" d="M8.9 6.5h6.3v1.3l-.9 .6v4.4l2.2 2.1v1.1h-9.9v-1.1l2.2 -2.1v-4.4l-.9 -.6z"/><rect x="10.8" y="15.5" width="1.3" height="3.9" fill="#fff"/><path d="M4.5 5.8l13.8 13.2" stroke="#0f2a4b" stroke-width="3"/><path d="M4.7 6l13.6 13" stroke="#fff" stroke-width="1.3" stroke-linecap="round"/></svg>
<svg class="ic" style="left:1091.8px;top:9.6px" width="14" height="18" viewBox="0 0 14 18" fill="none" stroke="#fff" stroke-width="1.5" stroke-linecap="round" stroke-linejoin="round"><path d="M4.3 2.2H3.3A1.9 1.9 0 0 0 1.4 4.1V15.2A1.9 1.9 0 0 0 3.3 17.1H10.7A1.9 1.9 0 0 0 12.6 15.2V4.1A1.9 1.9 0 0 0 10.7 2.2H9.7"/><rect x="4.4" y="1.6" width="5.2" height="2.4" rx="1.2"/><path d="M3.9 8.6l.8 .8l1.3 -1.4M8 9.2h2.3M4.1 12.3h1.1M7.8 12.3h2.5" stroke-width="1.35"/></svg>
<span class="t" style="left:1111.00px;top:7.77px;font-size:17.12px;letter-spacing:-0.582px;color:#fff;font-weight:400;">Feladatok</span>
<svg class="ic" style="left:1232.5px;top:11px" width="15" height="15" viewBox="0 0 24 24" fill="#fff" ><path d="M19 13h-6v6h-2v-6H5v-2h6V5h2v6h6v2z"/></svg>
<svg class="ic" style="left:1253px;top:10.5px" width="16" height="16" viewBox="0 0 24 24" fill="#fff" ><path d="M19 19H5V5h7V3H5c-1.11 0-2 .9-2 2v14c0 1.1.89 2 2 2h14c1.1 0 2-.9 2-2v-7h-2v7zM14 3v2h3.59l-9.83 9.83 1.41 1.41L19 6.41V10h2V3h-7z"/></svg>
<span class="t" style="left:1003.60px;top:52.06px;font-size:11.34px;letter-spacing:-0.414px;color:#333;font-weight:700;">Egyéb oldal</span>
<div style="left:916.3px;top:75px;width:81px;height:31px;background:#fff;border-left:1px solid #ececec"></div>
<span class="t" style="left:924.2px;top:84.70px;font-size:9.5px;color:#222;font-weight:700">Műveletek</span>
<div style="left:181px;top:75px;width:1px;height:462px;background:rgba(0,0,0,.07)"></div>
<div style="left:912.5px;top:106.5px;width:1px;height:431px;background:rgba(0,0,0,.07)"></div>
<div style="left:1003.2px;top:90.8px;width:266.2px;height:135.8px;border:1px solid #ebebeb;border-left:5.5px solid #e8888b;border-radius:5px;background:#fff;box-shadow:0 1px 2px rgba(0,0,0,.06)"></div>
<span class="t" style="left:1014.50px;top:100.69px;font-size:11.61px;letter-spacing:-0.426px;color:#444;font-weight:700;">Bevételezés</span>
<svg class="ic" style="left:1204px;top:100.10px" width="60" height="16" viewBox="0 0 60 16" fill="none" stroke-linecap="round" stroke-linejoin="round"><g stroke="#8a8a8a" stroke-width="1.25"><path d="M8.6 3.9H4.6A1.2 1.2 0 0 0 3.4 5.1V12.6A1.2 1.2 0 0 0 4.6 13.8H11.8A1.2 1.2 0 0 0 13 12.6V9"/><path d="M8.3 8.9L14.6 2.6"/><path d="M10.9 2.2H15V6.3"/></g><circle cx="30.6" cy="8.1" r="5.7" stroke="#3b7fc0" stroke-width="1.25"/><path d="M28.6 8.3l1.4 1.4l2.5 -2.8" stroke="#3b7fc0" stroke-width="1.4"/><g stroke="#e06a6a" stroke-width="1.25"><path d="M46.1 3.6H56.2"/><path d="M49.4 3.4V2.2H52.9V3.4"/><path d="M47.3 5L48 13.1A.9 .9 0 0 0 48.9 13.9H53.4A.9 .9 0 0 0 54.3 13.1L55 5"/></g></svg>
<span class="t" style="left:1014.50px;top:118.72px;font-size:11.56px;letter-spacing:-0.395px;color:#5a5a5a;font-weight:400;">Felelős:</span>
<div style="left:1058.80px;top:119.00px;width:14.6px;height:14.6px;border-radius:50%;background:#efefef"></div>
<span class="t" style="left:1056.10px;width:20px;text-align:center;top:120.78px;font-size:8.88px;letter-spacing:-0.325px;color:#4a4a4a;font-weight:700;">LD</span>
<span class="t" style="left:1014.50px;top:134.52px;font-size:11.56px;letter-spacing:-0.395px;color:#5a5a5a;font-weight:400;">Határidő:</span>
<svg class="ic" style="left:1061.95px;top:136.29999999999998px" width="12.5" height="12.5" viewBox="0 0 24 24" fill="#dc5f5b" ><path d="M1 21h22L12 2 1 21zm12-3h-2v-2h2v2zm0-4h-2v-4h2v4z"/></svg>
<span class="t" style="left:1080.00px;top:134.52px;font-size:11.56px;letter-spacing:-0.395px;color:#444;font-weight:400;">2025 júl. 25. 13:34</span>
<span class="t" style="left:1014.50px;top:153.12px;font-size:11.56px;letter-spacing:-0.395px;color:#5a5a5a;font-weight:400;">Kapcsolódó:</span>
<span class="t" style="left:1082.60px;top:153.12px;font-size:11.56px;letter-spacing:-0.395px;color:#3b87c8;font-weight:400;">SZÁLLÍTMÁNY - SHP-2025-000003</span>
<span class="t" style="left:1014.50px;top:187.82px;font-size:11.56px;letter-spacing:-0.395px;color:#444;font-weight:400;">Vételezd be a szállítmányt!</span>
<div style="left:1003.2px;top:233.8px;width:266.2px;height:130.39999999999998px;border:1px solid #ebebeb;border-left:5.5px solid #f5ae3e;border-radius:5px;background:#fff;box-shadow:0 1px 2px rgba(0,0,0,.06)"></div>
<span class="t" style="left:1014.50px;top:243.19px;font-size:11.61px;letter-spacing:-0.426px;color:#444;font-weight:700;">Hibás cím a rendelésben</span>
<svg class="ic" style="left:1204px;top:242.60px" width="60" height="16" viewBox="0 0 60 16" fill="none" stroke-linecap="round" stroke-linejoin="round"><g stroke="#8a8a8a" stroke-width="1.25"><path d="M8.6 3.9H4.6A1.2 1.2 0 0 0 3.4 5.1V12.6A1.2 1.2 0 0 0 4.6 13.8H11.8A1.2 1.2 0 0 0 13 12.6V9"/><path d="M8.3 8.9L14.6 2.6"/><path d="M10.9 2.2H15V6.3"/></g><circle cx="30.6" cy="8.1" r="5.7" stroke="#3b7fc0" stroke-width="1.25"/><path d="M28.6 8.3l1.4 1.4l2.5 -2.8" stroke="#3b7fc0" stroke-width="1.4"/><g stroke="#e06a6a" stroke-width="1.25"><path d="M46.1 3.6H56.2"/><path d="M49.4 3.4V2.2H52.9V3.4"/><path d="M47.3 5L48 13.1A.9 .9 0 0 0 48.9 13.9H53.4A.9 .9 0 0 0 54.3 13.1L55 5"/></g></svg>
<span class="t" style="left:1014.50px;top:261.02px;font-size:11.56px;letter-spacing:-0.395px;color:#5a5a5a;font-weight:400;">Felelős:</span>
<div style="left:1058.80px;top:261.30px;width:14.6px;height:14.6px;border-radius:50%;background:#efefef"></div>
<span class="t" style="left:1056.10px;width:20px;text-align:center;top:263.08px;font-size:8.88px;letter-spacing:-0.325px;color:#4a4a4a;font-weight:700;">LD</span>
<span class="t" style="left:1014.50px;top:277.22px;font-size:11.56px;letter-spacing:-0.395px;color:#5a5a5a;font-weight:400;">Határidő:</span>
<svg class="ic" style="left:1061.95px;top:279.0px" width="12.5" height="12.5" viewBox="0 0 24 24" fill="#dc5f5b" ><path d="M1 21h22L12 2 1 21zm12-3h-2v-2h2v2zm0-4h-2v-4h2v4z"/></svg>
<span class="t" style="left:1080.00px;top:277.22px;font-size:11.56px;letter-spacing:-0.395px;color:#444;font-weight:400;">2025 júl. 24. 00:00</span>
<span class="t" style="left:1014.50px;top:295.52px;font-size:11.56px;letter-spacing:-0.395px;color:#5a5a5a;font-weight:400;">Kapcsolódó:</span>
<span class="t" style="left:1082.60px;top:295.52px;font-size:11.56px;letter-spacing:-0.395px;color:#3b87c8;font-weight:400;">RENDELÉS - ORD-2025-000014</span>
<span class="t" style="left:1014.50px;top:319.92px;font-size:11.56px;letter-spacing:-0.395px;color:#444;font-weight:400;">A rendeléshez hibás cím tartozik. Ellenőrizd a</span>
<span class="t" style="left:1014.50px;top:335.02px;font-size:11.56px;letter-spacing:-0.395px;color:#444;font-weight:400;">szállítási és számlázási adatokat a rendelésen!</span>
<div style="left:1003.2px;top:370.5px;width:266.2px;height:229.5px;border:1px solid #ebebeb;border-left:5.5px solid #f5ae3e;border-radius:5px;background:#fff;box-shadow:0 1px 2px rgba(0,0,0,.06)"></div>
<span class="t" style="left:1014.50px;top:380.89px;font-size:11.61px;letter-spacing:-0.426px;color:#444;font-weight:700;">Nézd meg a lejárt számlákat</span>
<svg class="ic" style="left:1204px;top:380.10px" width="60" height="16" viewBox="0 0 60 16" fill="none" stroke-linecap="round" stroke-linejoin="round"><g stroke="#8a8a8a" stroke-width="1.25"><path d="M8.6 3.9H4.6A1.2 1.2 0 0 0 3.4 5.1V12.6A1.2 1.2 0 0 0 4.6 13.8H11.8A1.2 1.2 0 0 0 13 12.6V9"/><path d="M8.3 8.9L14.6 2.6"/><path d="M10.9 2.2H15V6.3"/></g><circle cx="30.6" cy="8.1" r="5.7" stroke="#3b7fc0" stroke-width="1.25"/><path d="M28.6 8.3l1.4 1.4l2.5 -2.8" stroke="#3b7fc0" stroke-width="1.4"/><g stroke="#e06a6a" stroke-width="1.25"><path d="M46.1 3.6H56.2"/><path d="M49.4 3.4V2.2H52.9V3.4"/><path d="M47.3 5L48 13.1A.9 .9 0 0 0 48.9 13.9H53.4A.9 .9 0 0 0 54.3 13.1L55 5"/></g></svg>
<span class="t" style="left:1014.50px;top:398.32px;font-size:11.56px;letter-spacing:-0.395px;color:#5a5a5a;font-weight:400;">Típus:&nbsp; Lejárt számlák</span>
<span class="t" style="left:1014.50px;top:414.02px;font-size:11.56px;letter-spacing:-0.395px;color:#5a5a5a;font-weight:400;">Felelős:</span>
<div style="left:1058.80px;top:414.30px;width:14.6px;height:14.6px;border-radius:50%;background:#efefef"></div>
<span class="t" style="left:1056.10px;width:20px;text-align:center;top:416.08px;font-size:8.88px;letter-spacing:-0.325px;color:#4a4a4a;font-weight:700;">LD</span>
<span class="t" style="left:1014.50px;top:430.02px;font-size:11.56px;letter-spacing:-0.395px;color:#5a5a5a;font-weight:400;">Határidő:</span>
<svg class="ic" style="left:1061.95px;top:431.8px" width="12.5" height="12.5" viewBox="0 0 24 24" fill="#dc5f5b" ><path d="M1 21h22L12 2 1 21zm12-3h-2v-2h2v2zm0-4h-2v-4h2v4z"/></svg>
<span class="t" style="left:1080.00px;top:430.02px;font-size:11.56px;letter-spacing:-0.395px;color:#444;font-weight:400;">2025 júl. 29. 00:00</span>
<span class="t" style="left:1014.50px;top:456.92px;font-size:11.56px;letter-spacing:-0.395px;color:#5a5a5a;font-weight:400;">Kapcsolódó:</span>
<span class="t" style="left:1081.70px;width:180px;text-align:center;top:448.62px;font-size:11.56px;letter-spacing:-0.395px;color:#3b87c8;font-weight:400;">RENDELÉSEK - NYITOTT</span>
<span class="t" style="left:1081.70px;width:180px;text-align:center;top:465.22px;font-size:11.56px;letter-spacing:-0.395px;color:#3b87c8;font-weight:400;">RENDELÉSEK</span>
<div style="left:1010px;top:497px;width:255px;height:44.6px;overflow:hidden">
<span class="t" style="left:4.50px;top:2.32px;font-size:11.56px;letter-spacing:-0.395px;color:#444;font-weight:400;">Vannak lejárt határidejű számláink, nézd át kérlek</span>
<span class="t" style="left:4.50px;top:18.12px;font-size:11.56px;letter-spacing:-0.395px;color:#444;font-weight:400;">és ha nincsenek fizetve, akkor fizesd ki, ha pedig ki</span>
<span class="t" style="left:4.50px;top:33.92px;font-size:11.56px;letter-spacing:-0.395px;color:#444;font-weight:400;">vannak fizetve, akkor jelöld!</span>
</div>
<span class="t" style="left:1088.80px;width:100px;text-align:center;top:553.07px;font-size:9.95px;letter-spacing:-0.338px;color:#3b87c8;font-weight:400;letter-spacing:.12px">RÉSZLETEK</span>
<div style="left:1210.5px;top:55.5px;width:58.5px;height:17px;border:1px solid #e6e6e6;border-radius:3px;background:#fff"></div>
<div style="left:1230.5px;top:56.5px;width:19px;height:15px;background:#e8f1fa;border-left:1px solid #e6e6e6;border-right:1px solid #e6e6e6"></div>
<svg class="ic" style="left:1214px;top:58px" width="13" height="11" viewBox="0 0 13 11" fill="none" stroke="#777" stroke-width="1" stroke-linecap="round"><circle cx="6.5" cy="3.5" r="1.7"/><path d="M2.2 5.2a1.4 1.4 0 1 1 1.6 -2.3"/><path d="M10.8 5.2a1.4 1.4 0 1 0 -1.6 -2.3"/><path d="M3.9 9.6a2.6 2.4 0 0 1 5.2 0"/><path d="M1.1 8.9a2.2 2.1 0 0 1 2.4 -2"/><path d="M11.9 8.9a2.2 2.1 0 0 0 -2.4 -2"/></svg>
<svg class="ic" style="left:1234.5px;top:58px" width="11" height="11" viewBox="0 0 11 11" fill="none" stroke="#3b80c0" stroke-width="1.2" stroke-linecap="round"><circle cx="5.6" cy="3.8" r="2"/><path d="M2 9.8a3.6 3.2 0 0 1 7.2 0"/></svg>
<svg class="ic" style="left:1254px;top:58px" width="11" height="11" viewBox="0 0 11 11" fill="none" stroke="#777" stroke-width="1.1" stroke-linecap="round"><circle cx="5.6" cy="3.8" r="2"/><path d="M2 9.8a3.6 3.2 0 0 1 7.2 0"/><path d="M1.3 0.8l9 9"/></svg>
<span class="t" style="left:1004.00px;top:68.13px;font-size:10.17px;letter-spacing:-0.348px;color:#777;font-weight:400;">Nincsenek kapcsolódó feladatok. Én vagyok a felelős</span>
</body></html>
